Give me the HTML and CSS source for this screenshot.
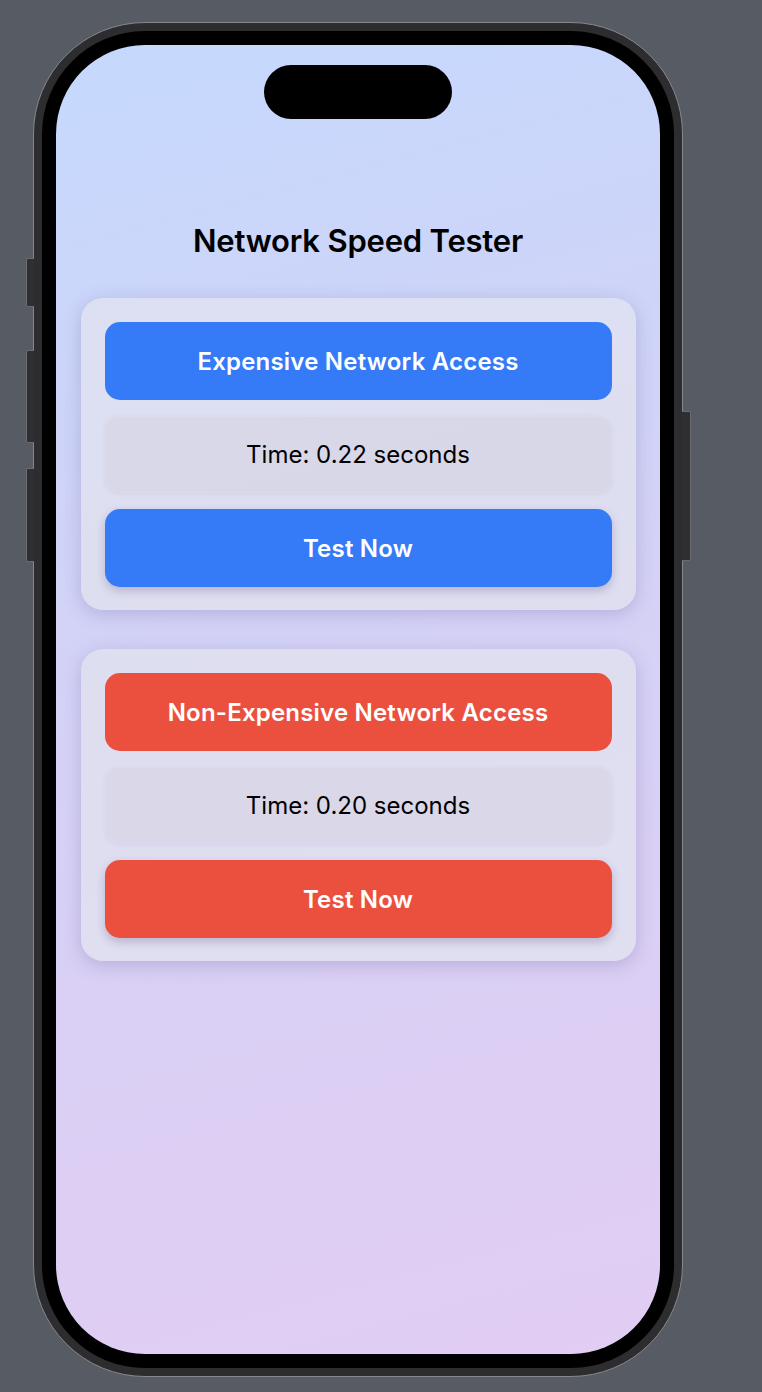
FILE: index.html
```html
<!DOCTYPE html>
<html lang="en">
<head>
<meta charset="utf-8">
<title>Network Speed Tester</title>
<link rel="stylesheet" href="styles.css">
</head>
<body>
<div class="phone">
  <span class="side-btn side-action"></span>
  <span class="side-btn side-vol-up"></span>
  <span class="side-btn side-vol-down"></span>
  <span class="side-btn side-power"></span>
  <div class="bezel">
    <div class="screen">
      <div class="island"></div>
      <h1 class="title">Network Speed Tester</h1>
      <section class="card">
        <div class="pill pill-blue">Expensive Network Access</div>
        <div class="time-box">Time: 0.22 seconds</div>
        <div class="pill pill-blue pill-action">Test Now</div>
      </section>
      <section class="card">
        <div class="pill pill-red">Non-Expensive Network Access</div>
        <div class="time-box">Time: 0.20 seconds</div>
        <div class="pill pill-red pill-action">Test Now</div>
      </section>
    </div>
  </div>
</div>
</body>
</html>
```

FILE: styles.css
```css
* { box-sizing: border-box; }

html, body {
  margin: 0;
  height: 100%;
}

body {
  background: #575c64;
  padding: 22px 0 0 33px;
  font-family: Inter, "Noto Sans", "Liberation Sans", sans-serif;
  overflow: hidden;
}

.phone {
  position: relative;
  width: 650px;
  height: 1355px;
  background: #2d2d2f;
  border: 1px solid #86888b;
  border-radius: 112px;
  padding: 8px;
}

.side-btn {
  position: absolute;
  background: #2f2f31;
  border: 1px solid #6a6c70;
}

.side-action { left: -8px; top: 235px; width: 8px; height: 49px; border-right: none; border-radius: 2px 0 0 2px; }
.side-vol-up { left: -8px; top: 327px; width: 8px; height: 93px; border-right: none; border-radius: 2px 0 0 2px; }
.side-vol-down { left: -8px; top: 445px; width: 8px; height: 94px; border-right: none; border-radius: 2px 0 0 2px; }
.side-power { right: -9px; top: 388px; width: 9px; height: 150px; border-left: none; border-radius: 0 2px 2px 0; }

.bezel {
  height: 100%;
  background: #000;
  border-radius: 103px;
  padding: 14px;
}

.screen {
  height: 100%;
  border-radius: 89px;
  background: linear-gradient(165deg, #c5d9fd 0%, #ccd5f9 22%, #d4d2f6 45%, #dbcff4 72%, #e2cdf3 100%);
  display: flex;
  flex-direction: column;
  align-items: center;
  overflow: hidden;
}

.island {
  margin-top: 20px;
  width: 188px;
  height: 54px;
  border-radius: 27px;
  background: #000;
  flex-shrink: 0;
}

.title {
  margin: 102px 0 37px;
  height: 40px;
  line-height: 40px;
  font-size: 31px;
  font-weight: 600;
  color: #000;
  letter-spacing: -0.2px;
}

.card {
  width: 555px;
  margin-bottom: 39px;
  padding: 24px 24px 23px;
  border-radius: 22px;
  background: rgba(226, 226, 239, 0.78);
  box-shadow: 0 4px 18px rgba(90, 80, 150, 0.26);
  display: flex;
  flex-direction: column;
  gap: 16px;
}

.pill {
  height: 78px;
  border-radius: 15px;
  display: flex;
  align-items: center;
  justify-content: center;
  color: #fff;
  font-size: 24px;
  font-weight: 600;
  letter-spacing: 0.2px;
}

.pill-blue { background: #357af6; }
.pill-red { background: #eb503f; }

.pill-action {
  box-shadow: 0 4px 10px rgba(40, 30, 80, 0.22);
}

.time-box {
  height: 77px;
  border-radius: 15px;
  display: flex;
  align-items: center;
  justify-content: center;
  background: rgba(212, 210, 224, 0.55);
  box-shadow: 0 1px 4px rgba(60, 50, 100, 0.08), inset 0 0 0 1px rgba(255, 255, 255, 0.12);
  color: #000;
  font-size: 24px;
  font-weight: 400;
}
```
